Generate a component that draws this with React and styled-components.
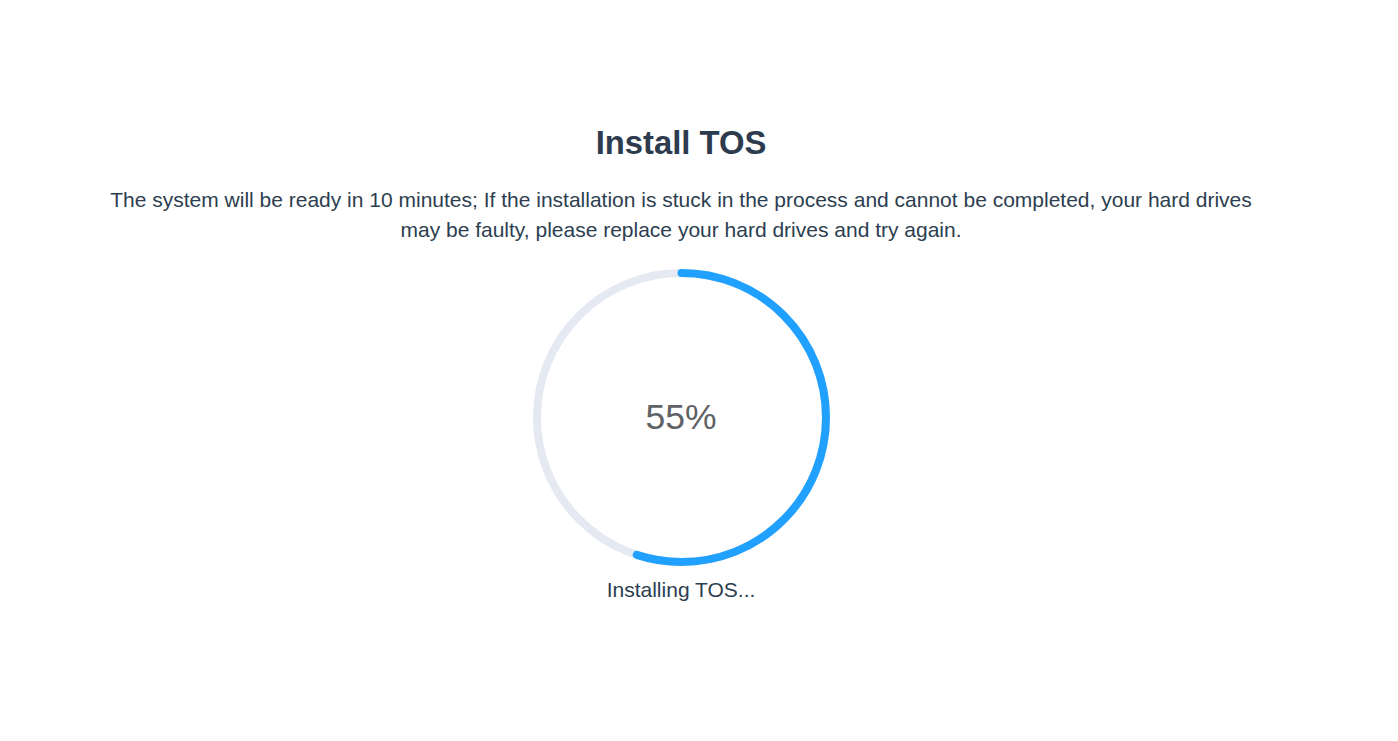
import React from 'react';
import styled, { createGlobalStyle } from 'styled-components';

const GlobalStyle = createGlobalStyle`
  html, body {
    margin: 0;
    padding: 0;
    background: #fff;
  }

  body {
    font-family: "Liberation Sans", Arial, Helvetica, sans-serif;
  }
`;

const Page = styled.div`
  width: 100%;
  height: 741px;
  display: flex;
  justify-content: center;
  padding-right: 36px;
  box-sizing: border-box;
`;

const Panel = styled.div`
  width: 1160px;
  padding-top: 123px;
  display: flex;
  flex-direction: column;
  align-items: center;
  color: #2c3e50;
`;

const Title = styled.h1`
  margin: 0;
  font-size: 32.8px;
  line-height: 40px;
  font-weight: bold;
  color: #2d3b4e;
`;

const Description = styled.p`
  margin: 22px 0 0;
  font-size: 21px;
  line-height: 30px;
  text-align: center;
`;

const CircleWrap = styled.div`
  position: relative;
  width: ${(p) => p.size}px;
  height: ${(p) => p.size}px;
  margin-top: 24px;
`;

const Percent = styled.div`
  position: absolute;
  inset: 0;
  display: flex;
  align-items: center;
  justify-content: center;
  font-size: 35.5px;
  color: #5f6266;
`;

const Status = styled.div`
  margin-top: 12px;
  font-size: 21px;
  line-height: 24px;
`;

const ProgressCircle = ({ percent, size = 297, stroke = 8 }) => {
  const r = (size - stroke) / 2;
  const c = size / 2;
  const len = 2 * Math.PI * r;
  return (
    <CircleWrap size={size}>
      <svg width={size} height={size} viewBox={`0 0 ${size} ${size}`}>
        <circle cx={c} cy={c} r={r} fill="none" stroke="#e5e9f2" strokeWidth={stroke} />
        <circle
          cx={c}
          cy={c}
          r={r}
          fill="none"
          stroke="#20a0ff"
          strokeWidth={stroke}
          strokeLinecap="round"
          strokeDasharray={`${(len * percent) / 100} ${len}`}
          transform={`rotate(-90 ${c} ${c})`}
        />
      </svg>
      <Percent>{percent}%</Percent>
    </CircleWrap>
  );
};

const App = () => {
  return (
    <>
      <GlobalStyle />
      <Page>
        <Panel>
          <Title>Install TOS</Title>
          <Description>
            The system will be ready in 10 minutes; If the installation is stuck in the process and cannot be completed, your hard drives may be faulty, please replace your hard drives and try again.
          </Description>
          <ProgressCircle percent={55} />
          <Status>Installing TOS...</Status>
        </Panel>
      </Page>
    </>
  );
};

export default App;
